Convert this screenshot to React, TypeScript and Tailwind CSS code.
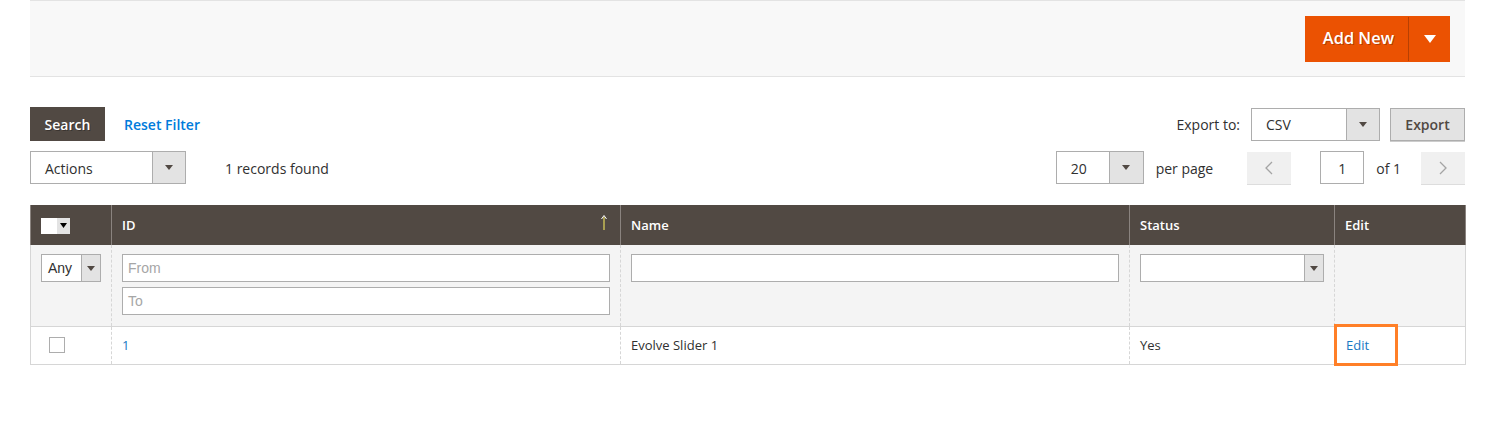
import React from "react";

function Caret({ className = "" }: { className?: string }) {
    return (
        <svg width="8" height="5" viewBox="0 0 8 5" className={className}>
            <path d="M0 0 L8 0 L4 5 Z" fill="#514943" />
        </svg>
    );
}

function Select({ label, width, arrow }: { label: string; width: string; arrow: string }) {
    return (
        <div className={`flex h-[33px] border border-[#adadad] bg-white ${width}`}>
            <div className="flex flex-1 items-center pl-[14px] pt-[1px] text-[14px] text-[#303030]">{label}</div>
            <div className={`flex items-center justify-center border-l border-[#adadad] bg-[#e3e3e3] ${arrow}`}>
                <Caret />
            </div>
        </div>
    );
}

export default function App() {
    return (
        <div className="min-h-[425px] bg-white px-[30px] font-['Open_Sans',sans-serif] text-[14px] text-[#303030]">
            {/* page actions */}
            <div className="flex h-[77px] items-center justify-end border-y border-[#e3e3e3] bg-[#f8f8f8] pr-[15px]">
                <div className="flex h-[46px] bg-[#eb5202] text-white">
                    <div className="flex items-center pl-[18px] pr-[14px] text-[16.4px] font-semibold [text-shadow:1px_1px_0_rgba(0,0,0,0.25)]">
                        Add New
                    </div>
                    <div className="my-[1px] w-px bg-[#b84002]" />
                    <div className="flex w-[41px] items-center justify-center">
                        <svg width="12" height="8" viewBox="0 0 12 8">
                            <path d="M0 0 L12 0 L6 8 Z" fill="#fff" />
                        </svg>
                    </div>
                </div>
            </div>

            {/* grid toolbar */}
            <div className="mt-[30px] flex justify-between">
                <div className="flex items-center">
                    <button className="h-[34px] w-[75px] bg-[#514943] text-[14px] font-semibold text-white [text-shadow:1px_1px_0_rgba(0,0,0,0.3)]">
                        Search
                    </button>
                    <a className="ml-[19px] text-[14px] font-semibold text-[#007bdb]">Reset Filter</a>
                </div>
                <div className="flex items-center">
                    <span className="mr-[11px]">Export to:</span>
                    <Select label="CSV" width="w-[129px]" arrow="w-[33px]" />
                    <button className="ml-[10px] h-[33px] w-[75px] border border-[#adadad] bg-[#e3e3e3] text-[14px] font-semibold text-[#514943] shadow-[0_1px_0_#ccc]">
                        Export
                    </button>
                </div>
            </div>
            <div className="mt-[10px] flex justify-between">
                <div className="flex items-center">
                    <Select label="Actions" width="w-[156px]" arrow="w-[33px]" />
                    <span className="ml-[39px] pt-[1px]">1 records found</span>
                </div>
                <div className="flex items-center">
                    <Select label="20" width="w-[88px]" arrow="w-[34px]" />
                    <span className="ml-[12px] pt-[1px]">per page</span>
                    <div className="ml-[34px] flex h-[32px] w-[44px] items-center justify-center bg-[#f0f0f0] shadow-[0_1px_0_#ddd]">
                        <svg width="8" height="14" viewBox="0 0 8 14">
                            <path d="M7 1 L1 7 L7 13" stroke="#a4a4a4" strokeWidth="1.3" fill="none" />
                        </svg>
                    </div>
                    <div className="ml-[29px] flex h-[33px] w-[44px] items-center justify-center border border-[#adadad] bg-white pt-[1px]">
                        1
                    </div>
                    <span className="ml-[12px] pt-[1px]">of 1</span>
                    <div className="ml-[20px] flex h-[32px] w-[44px] items-center justify-center bg-[#f0f0f0] shadow-[0_1px_0_#ddd]">
                        <svg width="8" height="14" viewBox="0 0 8 14">
                            <path d="M1 1 L7 7 L1 13" stroke="#a4a4a4" strokeWidth="1.3" fill="none" />
                        </svg>
                    </div>
                </div>
            </div>

            {/* grid */}
            <table className="mt-[21px] w-full table-fixed border-collapse">
                <colgroup>
                    <col className="w-[81px]" />
                    <col className="w-[509px]" />
                    <col className="w-[509px]" />
                    <col className="w-[205px]" />
                    <col className="w-[131px]" />
                </colgroup>
                <thead>
                    <tr className="h-[40px] bg-[#514943] text-left text-[13px] font-semibold text-white">
                        <th className="border-x border-[#8a837f] px-[10px] pt-[1px]">
                            <div className="flex h-[16px] w-[29px]">
                                <div className="w-[16px] bg-white" />
                                <div className="flex flex-1 items-center justify-center bg-[#e3e3e3]">
                                    <svg width="7" height="5" viewBox="0 0 7 5">
                                        <path d="M0 0 L7 0 L3.5 5 Z" fill="#000" />
                                    </svg>
                                </div>
                            </div>
                        </th>
                        <th className="relative border-x border-[#8a837f] px-[10px] pt-[2px] font-semibold">
                            ID
                            <svg width="6" height="15" viewBox="0 0 6 15" className="absolute right-[13px] top-[10px]">
                                <path d="M3 2 L3 15" stroke="#e4d95c" strokeWidth="1.2" />
                                <path d="M0.5 4 L3 0.5 L5.5 4" stroke="#fff" strokeWidth="1" fill="none" />
                            </svg>
                        </th>
                        <th className="border-x border-[#8a837f] px-[10px] pt-[2px] font-semibold">Name</th>
                        <th className="border-x border-[#8a837f] px-[10px] pt-[2px] font-semibold">Status</th>
                        <th className="border-x border-[#8a837f] px-[10px] pt-[2px] font-semibold">Edit</th>
                    </tr>
                </thead>
                <tbody>
                    <tr className="h-[81px] bg-[#f4f4f4] align-top font-['Liberation_Sans',sans-serif] text-[13px]">
                        <td className="border-b border-l border-r border-[#d6d6d6] px-[10px] pt-[9px] [border-right-style:dashed]">
                            <div className="flex h-[28px] w-[60px] border border-[#adadad] bg-white">
                                <div className="flex flex-1 items-center pl-[6px] text-[14px] text-[#303030]">Any</div>
                                <div className="flex w-[19px] items-center justify-center border-l border-[#adadad] bg-[#e3e3e3]">
                                    <Caret />
                                </div>
                            </div>
                        </td>
                        <td className="border-b border-r border-[#d6d6d6] px-[10px] pt-[9px] [border-right-style:dashed]">
                            <div className="flex h-[28px] items-center border border-[#adadad] bg-white pl-[5px] text-[14px] text-[#a6a6a6]">
                                From
                            </div>
                            <div className="mt-[5px] flex h-[28px] items-center border border-[#adadad] bg-white pl-[5px] text-[14px] text-[#a6a6a6]">
                                To
                            </div>
                        </td>
                        <td className="border-b border-r border-[#d6d6d6] px-[10px] pt-[9px] [border-right-style:dashed]">
                            <div className="h-[28px] border border-[#adadad] bg-white" />
                        </td>
                        <td className="border-b border-r border-[#d6d6d6] px-[10px] pt-[9px] [border-right-style:dashed]">
                            <div className="flex h-[28px] border border-[#adadad] bg-white">
                                <div className="flex-1" />
                                <div className="flex w-[19px] items-center justify-center border-l border-[#adadad] bg-[#e3e3e3]">
                                    <Caret />
                                </div>
                            </div>
                        </td>
                        <td className="border-b border-r border-[#d6d6d6] px-[10px]" />
                    </tr>
                    <tr className="h-[38px] bg-white text-[13px]">
                        <td className="border-b border-l border-r border-[#d6d6d6] px-[18px] [border-right-style:dashed]">
                            <div className="h-[16px] w-[16px] border border-[#adadad] bg-white" />
                        </td>
                        <td className="border-b border-r border-[#d6d6d6] px-[10px] pt-[2px] text-[#1979c3] [border-right-style:dashed]">1</td>
                        <td className="border-b border-r border-[#d6d6d6] px-[10px] pt-[2px] [border-right-style:dashed]">Evolve Slider 1</td>
                        <td className="border-b border-r border-[#d6d6d6] px-[10px] pt-[2px] [border-right-style:dashed]">Yes</td>
                        <td className="relative border-b border-r border-[#d6d6d6] px-[11px] pt-[2px] text-[#1979c3]">
                            Edit
                            <div className="absolute -left-[1px] -top-[3px] h-[42px] w-[64px] border-[3px] border-[#ff7f27]" />
                        </td>
                    </tr>
                </tbody>
            </table>
        </div>
    );
}
